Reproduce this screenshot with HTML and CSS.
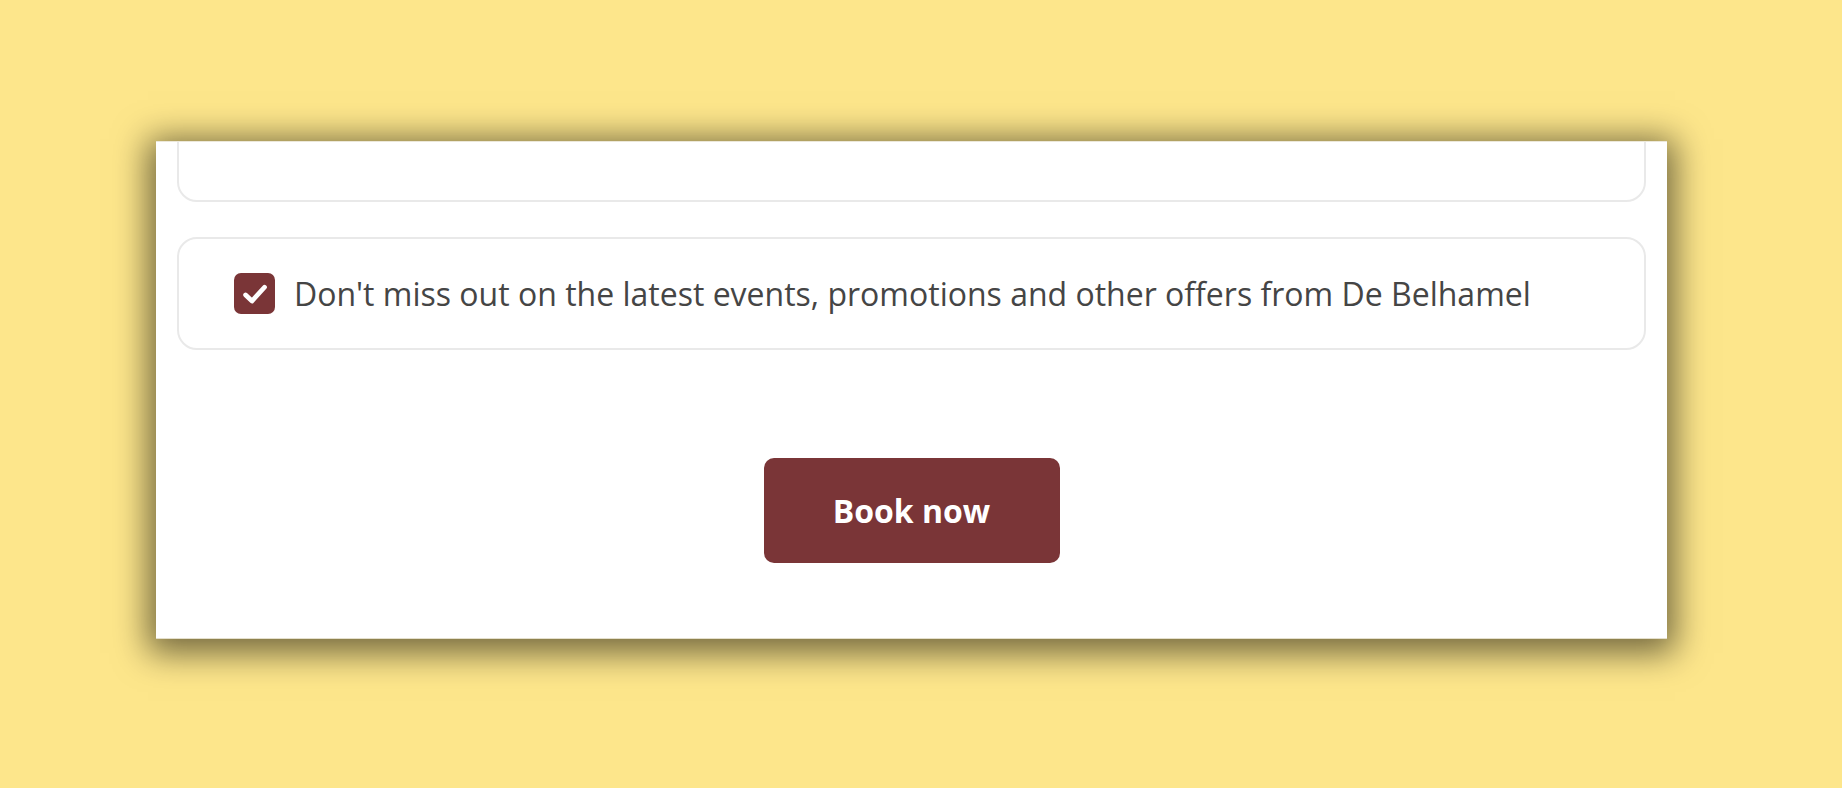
FILE: index.html
```html
<!DOCTYPE html>
<html lang="en">
<head>
<meta charset="utf-8">
<title>Booking</title>
<link rel="stylesheet" href="styles.css">
</head>
<body>
<div class="stage">
  <div class="card">
    <div class="box box-top"></div>
    <label class="box box-consent">
      <span class="check">
        <svg viewBox="0 0 24 24" width="24" height="24"><path d="M4.5 12.8 L9.6 17.6 L19.6 6.6" fill="none" stroke="#fff" stroke-width="3.8" stroke-linecap="round" stroke-linejoin="round"/></svg>
      </span>
      <span class="consent-text">Don't miss out on the latest events, promotions and other offers from De Belhamel</span>
    </label>
    <div class="actions">
      <button class="book" type="button">Book now</button>
    </div>
  </div>
</div>
</body>
</html>
```

FILE: styles.css
```css
html, body {
  margin: 0;
  padding: 0;
  background: #fde68b;
  font-family: "Open Sans", "Liberation Sans", sans-serif;
}

.stage {
  width: 1842px;
  height: 788px;
  padding: 141px 0 0 156px;
  box-sizing: border-box;
  display: flex;
}

.card {
  width: 1511px;
  height: 498px;
  background: #fff;
  border-top: 1px solid #ece8da;
  border-bottom: 1px solid #e4dfcc;
  box-shadow: 0 6px 32px 8px rgba(0, 0, 0, 0.55);
  overflow: hidden;
  padding: 0 21px;
  box-sizing: border-box;
  display: flex;
  flex-direction: column;
}

.box {
  border: 2px solid #e9e9e9;
  border-radius: 20px;
  box-sizing: border-box;
}

.box-top {
  height: 120px;
  margin-top: -60px;
  flex: none;
}

.box-consent {
  margin-top: 35px;
  height: 113px;
  display: flex;
  align-items: center;
  padding-left: 55px;
  gap: 19px;
  cursor: pointer;
}

.check {
  width: 41px;
  height: 41px;
  border-radius: 7px;
  background: #7a3537;
  display: flex;
  align-items: center;
  justify-content: center;
  flex: none;
}

.check svg {
  width: 30px;
  height: 30px;
}

.consent-text {
  font-size: 32px;
  color: #454545;
  line-height: 1.3;
}

.actions {
  display: flex;
  justify-content: center;
  margin-top: 108px;
}

.book {
  width: 296px;
  height: 105px;
  border: none;
  border-radius: 10px;
  background: #7a3537;
  color: #fff;
  font-family: "Open Sans", "Liberation Sans", sans-serif;
  font-weight: 700;
  font-size: 32px;
  cursor: pointer;
}
```
